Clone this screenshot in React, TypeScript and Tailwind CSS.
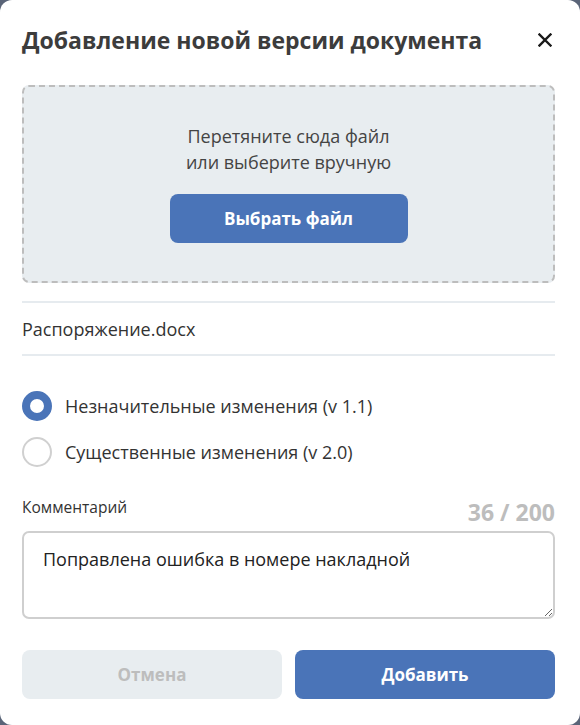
import React from "react";

export default function App() {
  return (
    <div className="w-[580px] h-[725px] bg-[#5a6478] overflow-hidden" style={{ fontFamily: '"Open Sans", "Noto Sans", sans-serif' }}>
      <div className="w-[580px] h-[725px] bg-white rounded-[12px] pl-[22px] pr-[25px] flex flex-col">
        <div className="flex items-center justify-between h-[80px]">
          <h1 className="text-[23px] font-bold text-[#3c3c3c] leading-none">Добавление новой версии документа</h1>
          <svg width="14" height="14" viewBox="0 0 14 14" className="mr-[3px]">
            <path d="M1.5 1.5 L12.5 12.5 M12.5 1.5 L1.5 12.5" stroke="#1a1a1a" strokeWidth="2.4" strokeLinecap="square" />
          </svg>
        </div>
        <div className="mt-[5px] h-[198px] rounded-[7px] border-2 border-dashed border-[#bdbdbd] bg-[#e8edf0] flex flex-col items-center pt-[36px]">
          <div className="text-[18px] leading-[26px] text-[#444] text-center">
            Перетяните сюда файл
            <br />
            или выберите вручную
          </div>
          <button className="mt-[19px] w-[238px] h-[49px] rounded-[8px] bg-[#4a74b8] text-white font-bold text-[17px]">
            Выбрать файл
          </button>
        </div>
        <div className="mt-[18px] h-[2px] bg-[#e6ebef]" />
        <div className="h-[51px] flex items-center text-[18px] text-[#333] pt-[1px]">Распоряжение.docx</div>
        <div className="h-[2px] bg-[#e6ebef]" />
        <div className="mt-[35px] flex flex-col gap-[16px]">
          <div className="flex items-center gap-[13px] h-[30px]">
            <div className="w-[30px] h-[30px] rounded-full border-[8px] border-[#4a74b8] bg-white" />
            <span className="text-[18px] text-[#333]">Незначительные изменения (v 1.1)</span>
          </div>
          <div className="flex items-center gap-[13px] h-[30px]">
            <div className="w-[30px] h-[30px] rounded-full border-2 border-[#d0d0d0] bg-white" />
            <span className="text-[18px] text-[#333]">Существенные изменения (v 2.0)</span>
          </div>
        </div>
        <div className="mt-[30px] flex items-end justify-between h-[26px]">
          <span className="text-[15.5px] text-[#333] leading-none mb-[8px]">Комментарий</span>
          <span className="text-[23px] font-bold text-[#bdbdbd] leading-none mb-[-1px]">36 / 200</span>
        </div>
        <textarea
          className="mt-[8px] h-[88px] w-full rounded-[7px] border-2 border-[#cfcfcf] px-[19px] pt-[13px] text-[18px] text-[#222] outline-none"
          style={{ fontFamily: '"Open Sans", "Noto Sans", sans-serif' }}
          defaultValue="Поправлена ошибка в номере накладной"
        />
        <div className="mt-[31px] grid grid-cols-2 gap-[13px]">
          <button className="h-[49px] rounded-[8px] bg-[#e8edf0] text-[#bdbdbd] font-bold text-[17px]">Отмена</button>
          <button className="h-[49px] rounded-[8px] bg-[#4a74b8] text-white font-bold text-[17px]">Добавить</button>
        </div>
      </div>
    </div>
  );
}
